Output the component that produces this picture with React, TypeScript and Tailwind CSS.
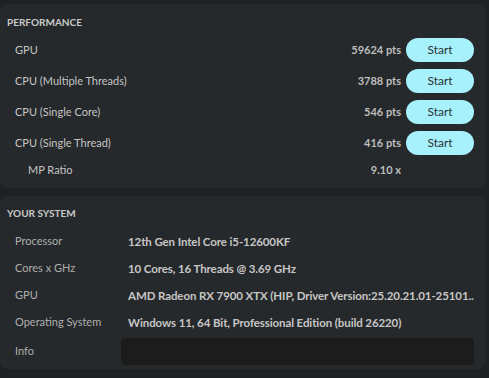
import React from 'react';

const perf = [
  { label: 'GPU', score: '59624 pts' },
  { label: 'CPU (Multiple Threads)', score: '3788 pts' },
  { label: 'CPU (Single Core)', score: '546 pts' },
  { label: 'CPU (Single Thread)', score: '416 pts' },
];

const system = [
  { label: 'Processor', value: '12th Gen Intel Core i5-12600KF' },
  { label: 'Cores x GHz', value: '10 Cores, 16 Threads @ 3.69 GHz' },
  { label: 'GPU', value: 'AMD Radeon RX 7900 XTX (HIP, Driver Version:25.20.21.01-25101..' },
  { label: 'Operating System', value: 'Windows 11, 64 Bit, Professional Edition (build 26220)' },
];

const App = () => {
  return (
    <div
      className="w-[489px] h-[378px] bg-[#1f2123] pt-[4px] overflow-hidden"
      style={{ fontFamily: 'Lato, "Open Sans", sans-serif' }}
    >
      {/* Performance */}
      <div className="w-[485px] h-[184px] bg-[#26292b] rounded-lg pt-[11px]">
        <h2 className="pl-[7px] text-[10px] font-bold text-[#c9c9c9] leading-[14px]">PERFORMANCE</h2>
        <div className="mt-[9px] flex flex-col gap-[7px]">
          {perf.map((row) => (
            <div key={row.label} className="flex items-center h-[24px] pl-[15px] pr-[11px]">
              <span className="flex-1 text-[11px] text-[#c4c4c4]">{row.label}</span>
              <span className="text-[11px] font-bold text-[#bdbdbd]">{row.score}</span>
              <button className="ml-[5px] w-[68px] h-[24px] rounded-full bg-[#a6f1fc] text-[12px] text-[#2b3236]">
                Start
              </button>
            </div>
          ))}
          <div className="flex items-center h-[16px] pl-[28px] pr-[84px]">
            <span className="flex-1 text-[11px] text-[#c4c4c4]">MP Ratio</span>
            <span className="text-[11px] font-bold text-[#bdbdbd]">9.10 x</span>
          </div>
        </div>
      </div>

      {/* Your system */}
      <div className="mt-[8px] w-[485px] h-[173px] bg-[#26292b] rounded-lg pt-[10px]">
        <h2 className="pl-[7px] text-[10px] font-bold text-[#c9c9c9] leading-[14px]">YOUR SYSTEM</h2>
        <div className="mt-[8px] flex flex-col">
          {system.map((row) => (
            <div key={row.label} className="flex items-center h-[27px] pl-[15px]">
              <span className="w-[113px] shrink-0 text-[11px] text-[#aeaeae]">{row.label}</span>
              <span className="text-[11.5px] tracking-[-0.1px] font-bold text-[#c6c6c6] whitespace-nowrap">
                {row.value}
              </span>
            </div>
          ))}
          <div className="flex items-center h-[28px] pl-[15px] pr-[11px] mt-[1px]">
            <span className="w-[106px] shrink-0 text-[11px] text-[#aeaeae]">Info</span>
            <div className="flex-1 h-[27px] rounded bg-[#1c1c1c]" />
          </div>
        </div>
      </div>
    </div>
  );
};

export default App;
